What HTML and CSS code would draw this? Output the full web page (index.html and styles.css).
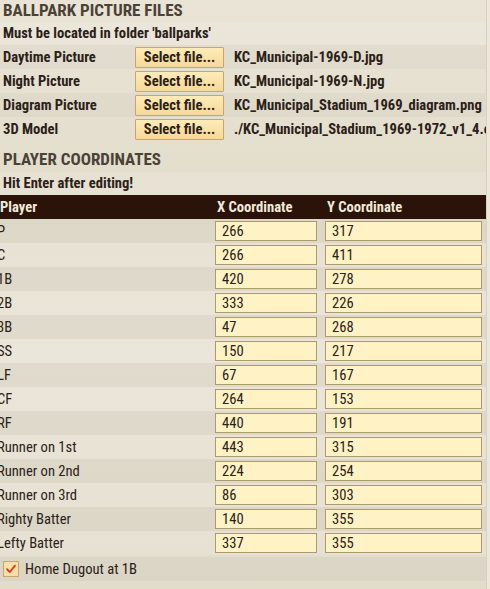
FILE: index.html
```html
<!DOCTYPE html>
<html lang="en">
<head>
    <meta charset="UTF-8">
    <title>Ballpark Editor</title>
    <link rel="stylesheet" href="styles.css">
</head>
<body>
    <div class="panel">
        <div class="section-title">BALLPARK PICTURE FILES</div>
        <div class="note">Must be located in folder 'ballparks'</div>

        <div class="file-row">
            <span class="file-label">Daytime Picture</span>
            <button class="select-btn">Select file...</button>
            <span class="file-name">KC_Municipal-1969-D.jpg</span>
        </div>
        <div class="file-row">
            <span class="file-label">Night Picture</span>
            <button class="select-btn">Select file...</button>
            <span class="file-name">KC_Municipal-1969-N.jpg</span>
        </div>
        <div class="file-row">
            <span class="file-label">Diagram Picture</span>
            <button class="select-btn">Select file...</button>
            <span class="file-name">KC_Municipal_Stadium_1969_diagram.png</span>
        </div>
        <div class="file-row">
            <span class="file-label">3D Model</span>
            <button class="select-btn">Select file...</button>
            <span class="file-name">./KC_Municipal_Stadium_1969-1972_v1_4.obj</span>
        </div>

        <div class="section-title second">PLAYER COORDINATES</div>
        <div class="note">Hit Enter after editing!</div>

        <div class="coords">
            <div class="coord-head">
                <span>Player</span>
                <span>X Coordinate</span>
                <span>Y Coordinate</span>
            </div>
            <div class="coord-row"><span class="pos">P</span><input class="num" value="266"><input class="num" value="317"></div>
            <div class="coord-row"><span class="pos">C</span><input class="num" value="266"><input class="num" value="411"></div>
            <div class="coord-row"><span class="pos">1B</span><input class="num" value="420"><input class="num" value="278"></div>
            <div class="coord-row"><span class="pos">2B</span><input class="num" value="333"><input class="num" value="226"></div>
            <div class="coord-row"><span class="pos">3B</span><input class="num" value="47"><input class="num" value="268"></div>
            <div class="coord-row"><span class="pos">SS</span><input class="num" value="150"><input class="num" value="217"></div>
            <div class="coord-row"><span class="pos">LF</span><input class="num" value="67"><input class="num" value="167"></div>
            <div class="coord-row"><span class="pos">CF</span><input class="num" value="264"><input class="num" value="153"></div>
            <div class="coord-row"><span class="pos">RF</span><input class="num" value="440"><input class="num" value="191"></div>
            <div class="coord-row"><span class="pos">Runner on 1st</span><input class="num" value="443"><input class="num" value="315"></div>
            <div class="coord-row"><span class="pos">Runner on 2nd</span><input class="num" value="224"><input class="num" value="254"></div>
            <div class="coord-row"><span class="pos">Runner on 3rd</span><input class="num" value="86"><input class="num" value="303"></div>
            <div class="coord-row"><span class="pos">Righty Batter</span><input class="num" value="140"><input class="num" value="355"></div>
            <div class="coord-row"><span class="pos">Lefty Batter</span><input class="num" value="337"><input class="num" value="355"></div>
        </div>

        <label class="check-row">
            <span class="check-box">
                <svg width="12" height="12" viewBox="0 0 12 12"><path d="M2 6.2 L4.8 9 L10 2.6" fill="none" stroke="#d3401a" stroke-width="1.8" stroke-linecap="round" stroke-linejoin="round"/></svg>
            </span>
            Home Dugout at 1B
        </label>
    </div>
</body>
</html>
```

FILE: styles.css
```css
body {
    margin: 0;
    background: #e7e2d3;
    color: #2b2118;
    font-family: "Roboto Condensed", "Liberation Sans Narrow", "DejaVu Sans Condensed", Roboto, sans-serif;
    font-size: 14.6px;
}
.panel {
    width: 486px;
    height: 589px;
    overflow: hidden;
    background: linear-gradient(180deg, #e9e4d5 0%, #e3ddcc 30%, #e8e3d4 60%, #e2dccb 100%);
    box-shadow: 1px 0 0 #d6d0bf, 3px 0 0 #ece8dc;
}
.section-title {
    height: 22px;
    line-height: 21px;
    padding-left: 3px;
    font-size: 17px;
    font-weight: bold;
    color: #4a4237;
}
.section-title.second {
    margin-top: 6px;
    height: 25px;
    line-height: 25px;
}
.note {
    height: 23px;
    line-height: 23px;
    padding-left: 3px;
    font-weight: bold;
    background: rgba(255, 255, 255, 0.12);
}
.file-row {
    display: grid;
    grid-template-columns: 122px 89px auto;
    column-gap: 10px;
    align-items: center;
    height: 24px;
    padding-left: 3px;
    font-weight: bold;
    white-space: nowrap;
}
.file-row:nth-of-type(odd) {
    background: rgba(0, 0, 0, 0.025);
}
.select-btn {
    height: 21px;
    padding: 0;
    border: 1px solid #caa468;
    border-radius: 1px;
    background: linear-gradient(180deg, #fdebb9 0%, #f7d898 100%);
    font-family: inherit;
    font-size: 14.6px;
    font-weight: bold;
    color: #2b2118;
}
.file-name {
    overflow: hidden;
}
.coord-head {
    display: grid;
    grid-template-columns: 217px 110px auto;
    height: 24px;
    line-height: 24px;
    background: #2a1309;
    color: #f2ead8;
    font-weight: bold;
}
.coord-row {
    display: grid;
    grid-template-columns: 207px 102px 157px;
    column-gap: 8px;
    align-items: center;
    height: 24px;
}
.coord-row:nth-child(even) {
    background: rgba(0, 0, 0, 0.03);
}
.coord-row:nth-child(odd) {
    background: rgba(255, 255, 255, 0.12);
}
.pos {
    margin-left: -3px;
    white-space: nowrap;
}
.num {
    box-sizing: border-box;
    width: 100%;
    height: 20px;
    margin: 0;
    padding: 0 6px;
    border: 1px solid #ad9a6e;
    border-radius: 0;
    background: #fff2c4;
    font-family: inherit;
    font-size: 14.6px;
    color: #2b2118;
    outline: none;
}
.check-row {
    display: flex;
    align-items: center;
    gap: 6px;
    height: 24px;
    margin-top: 2px;
    padding-left: 3px;
    background: rgba(0, 0, 0, 0.03);
}
.check-box {
    box-sizing: border-box;
    width: 16px;
    height: 16px;
    display: flex;
    align-items: center;
    justify-content: center;
    border: 1px solid #c9a56e;
    background: #f9ddaa;
}
```
